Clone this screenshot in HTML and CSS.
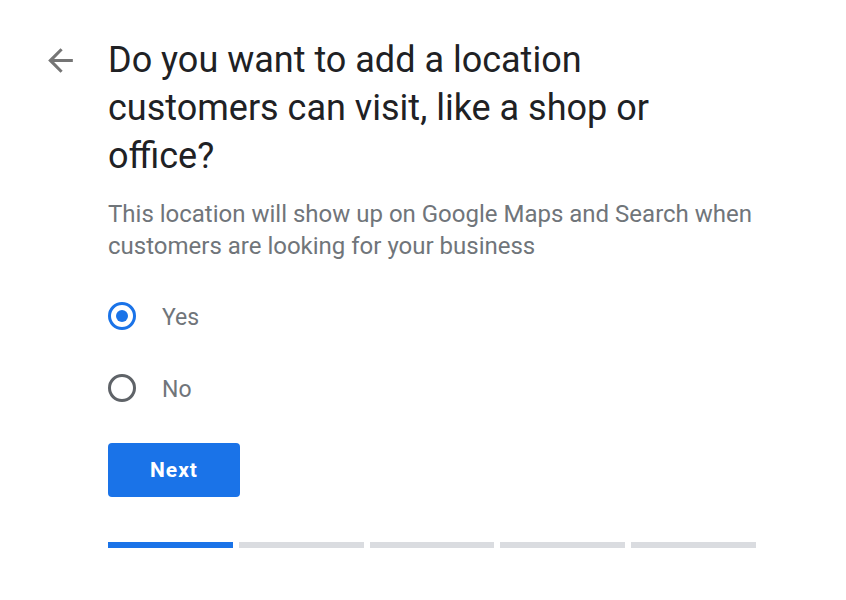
FILE: index.html
```html
<!DOCTYPE html>
<html>
<head>
	<meta charset="utf-8" />
	<title>Add a location</title>
	<link rel="stylesheet" href="styles.css">
</head>
<body>
<div class="page">
	<button class="back" aria-label="Back">
		<svg width="37" height="37" viewBox="0 0 24 24"><path d="M20 11H7.83l5.59-5.59L12 4l-8 8 8 8 1.41-1.41L7.83 13H20v-2z" fill="#757575"/></svg>
	</button>
	<div class="main">
		<h1 class="title">Do you want to add a location customers can visit, like a shop or office?</h1>
		<p class="sub">This location will show up on Google Maps and Search when customers are looking for your business</p>

		<div class="choices">
			<label class="choice">
				<span class="radio checked"></span>
				<span class="label">Yes</span>
			</label>
			<label class="choice">
				<span class="radio"></span>
				<span class="label">No</span>
			</label>
		</div>

		<button class="next">Next</button>

		<div class="steps">
			<span class="step done"></span>
			<span class="step"></span>
			<span class="step"></span>
			<span class="step"></span>
			<span class="step"></span>
		</div>
	</div>
</div>
</body>
</html>
```

FILE: styles.css
```css
html, body {
	padding: 0;
	margin: 0;
	background: #fff;
}
.page {
	display: flex;
	gap: 24px;
	padding: 36px 0 0 36px;
	font-family: Roboto, "Noto Sans", sans-serif;
}
.back {
	width: 48px;
	height: 48px;
	flex: none;
	border: 0;
	padding: 0;
	background: none;
	display: flex;
	align-items: center;
	justify-content: center;
}
.main {
	width: 648px;
}
.title {
	margin: 0;
	max-width: 600px;
	font-size: 36px;
	line-height: 48px;
	font-weight: 400;
	color: #202124;
}
.sub {
	margin: 18px 0 0;
	font-size: 24px;
	line-height: 32px;
	color: #70757a;
}
.choices {
	margin-top: 30px;
	display: flex;
	flex-direction: column;
	gap: 24px;
}
.choice {
	height: 48px;
	display: flex;
	align-items: center;
	gap: 26px;
}
.radio {
	width: 22px;
	height: 22px;
	border: 3px solid #5f6368;
	border-radius: 50%;
	box-sizing: content-box;
	display: flex;
	align-items: center;
	justify-content: center;
}
.radio.checked {
	border-color: #1a73e8;
}
.radio.checked:after {
	content: '';
	width: 12px;
	height: 12px;
	border-radius: 50%;
	background: #1a73e8;
}
.label {
	font-size: 23px;
	color: #70757a;
	padding-top: 2px;
}
.next {
	margin-top: 31px;
	width: 132px;
	height: 54px;
	border: 0;
	border-radius: 4px;
	background: #1a73e8;
	color: #fff;
	font-family: Roboto, sans-serif;
	font-size: 21px;
	font-weight: 700;
	letter-spacing: 1px;
}
.steps {
	margin-top: 45px;
	display: flex;
	gap: 6px;
}
.step {
	width: 125px;
	height: 6px;
	background: #dadce0;
}
.step.done {
	background: #1a73e8;
}
```
